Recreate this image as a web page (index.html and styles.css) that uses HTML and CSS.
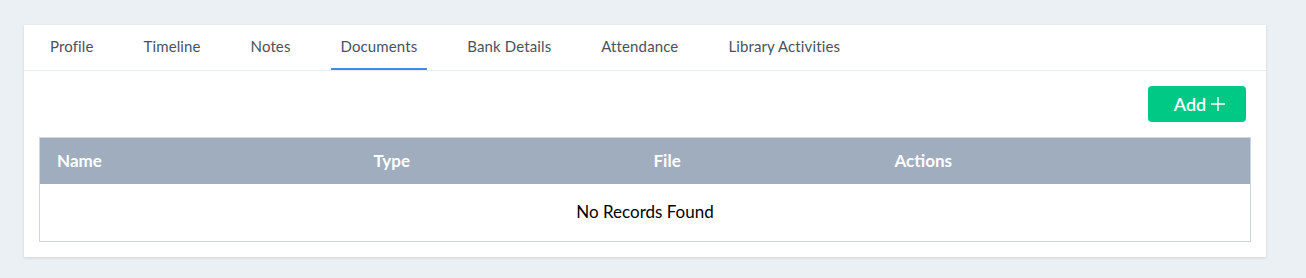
FILE: index.html
```html
<!DOCTYPE html>
<html lang="en">
<head>
  <meta charset="UTF-8" />
  <meta name="viewport" content="width=device-width, initial-scale=1.0"/>
  <title>Student Documents</title>
  <link rel="stylesheet" href="styles.css">
</head>
<body>
  <div class="card">
    <ul class="tabs">
      <li class="tab">Profile</li>
      <li class="tab">Timeline</li>
      <li class="tab">Notes</li>
      <li class="tab active">Documents</li>
      <li class="tab">Bank Details</li>
      <li class="tab">Attendance</li>
      <li class="tab">Library Activities</li>
    </ul>

    <div class="toolbar">
      <button class="add-btn">Add
        <svg width="16" height="16" viewBox="0 0 16 16" fill="none" stroke="white" stroke-width="1.4">
          <path d="M8 1v14M1 8h14"/>
        </svg>
      </button>
    </div>

    <table class="docs">
      <thead>
        <tr>
          <th class="col-name">Name</th>
          <th class="col-type">Type</th>
          <th class="col-file">File</th>
          <th class="col-actions">Actions</th>
        </tr>
      </thead>
      <tbody>
        <tr>
          <td colspan="4" class="empty">No Records Found</td>
        </tr>
      </tbody>
    </table>
  </div>
</body>
</html>
```

FILE: styles.css
```css
body {
  font-family: Lato, "Open Sans", sans-serif;
  margin: 0;
  padding: 25px 40px 22px 24px;
  background-color: #ebf0f5;
}

.card {
  background: #fff;
  box-shadow: 0 1px 3px rgba(0, 0, 0, 0.12);
  padding: 0 15px 15px 15px;
}

.tabs {
  list-style: none;
  margin: 0 -15px;
  padding: 0 16px;
  display: flex;
  gap: 30px;
  border-bottom: 1px solid #e9edf2;
}

.tab {
  padding: 0 10px;
  height: 45px;
  line-height: 43px;
  font-size: 15px;
  letter-spacing: 0.12px;
  color: #4a5260;
  border-bottom: 2px solid transparent;
  box-sizing: border-box;
}

.tab.active {
  border-bottom-color: #3a8fe0;
}

.toolbar {
  display: flex;
  justify-content: flex-end;
  padding: 15px 5px 15px 0;
}

.add-btn {
  width: 98px;
  height: 36px;
  background: #00c985;
  color: #fff;
  border: none;
  border-radius: 4px;
  font-family: inherit;
  font-size: 18px;
  font-weight: 600;
  display: flex;
  align-items: center;
  justify-content: center;
  gap: 4px;
  padding: 0 0 0 6px;
}

.docs {
  width: 100%;
  border-collapse: collapse;
  border: 1px solid #cdd5df;
  table-layout: fixed;
}

.docs th {
  background: #a0adbe;
  color: #fff;
  text-align: left;
  font-size: 17px;
  font-weight: 700;
  height: 46px;
  padding: 0 17px;
  box-sizing: border-box;
}

.col-name { width: 317px; }
.col-type { width: 280px; }
.col-file { width: 241px; }

.empty {
  text-align: center;
  height: 55px;
  padding: 0 0 2px;
  font-size: 17px;
  color: #000;
}
```
